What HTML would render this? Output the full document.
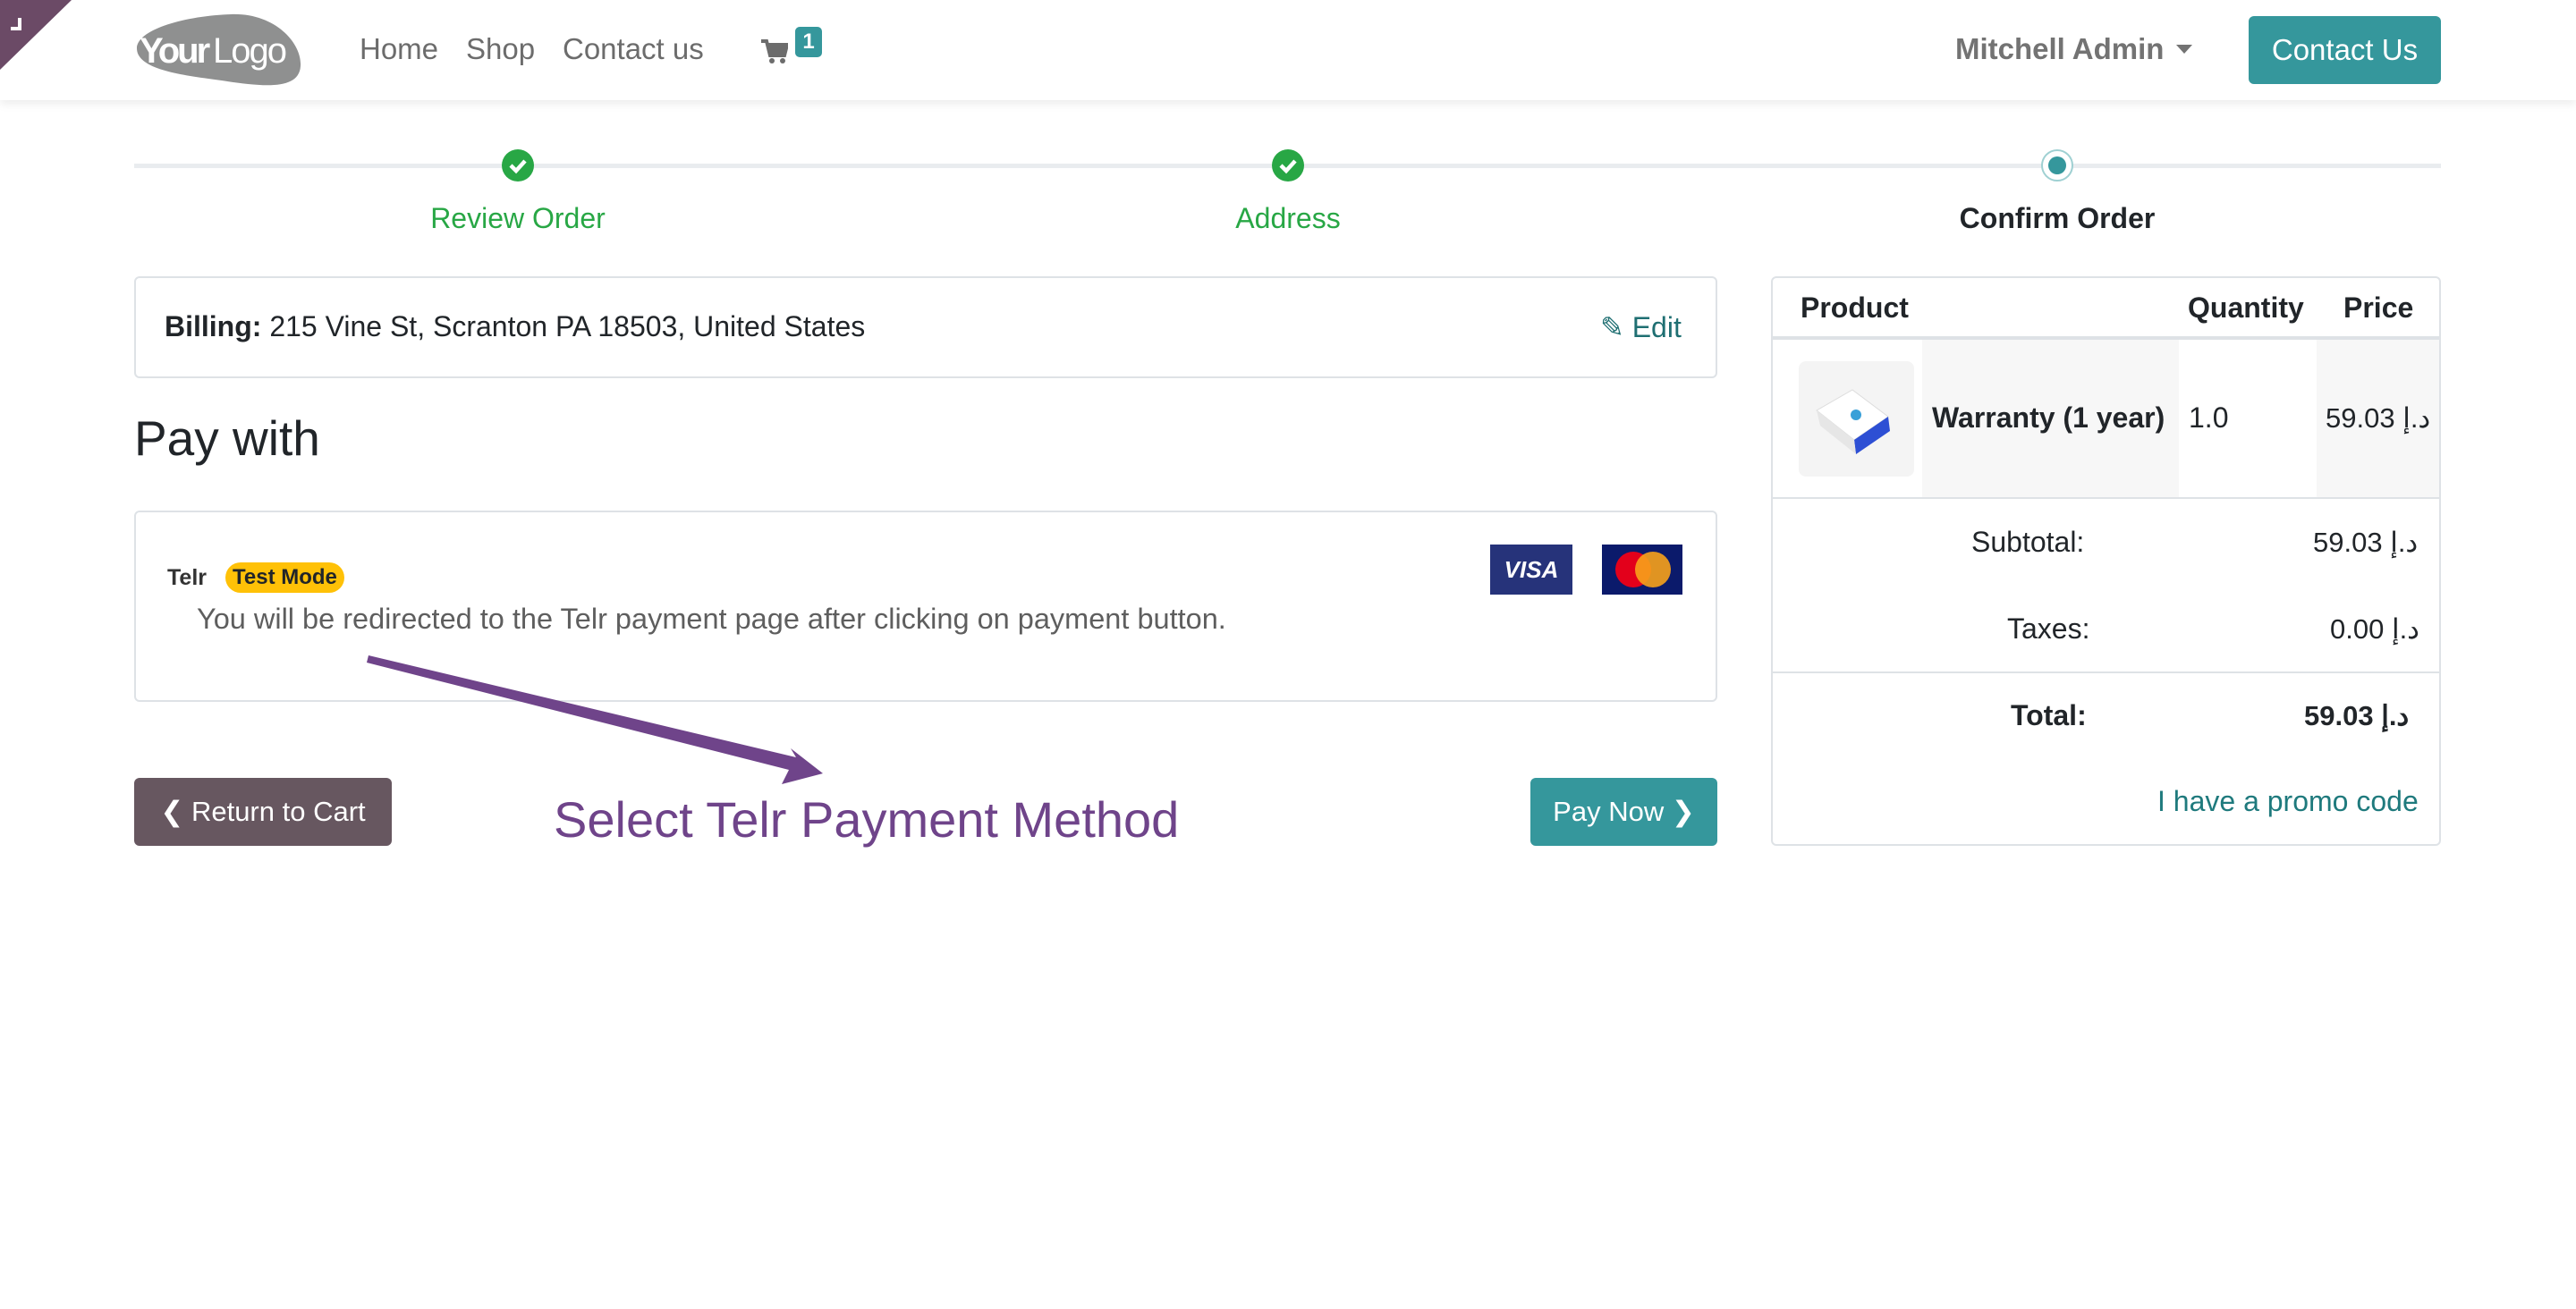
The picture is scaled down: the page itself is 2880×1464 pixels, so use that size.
<!DOCTYPE html>
<html><head><meta charset="utf-8"><style>
*{margin:0;padding:0;box-sizing:border-box}
body{width:2880px;height:1464px;background:#fff;font-family:"Liberation Sans",sans-serif;position:relative;overflow:hidden;color:#212529}
.a{position:absolute;white-space:nowrap}
.nav{position:absolute;left:0;top:0;width:2880px;height:112px;background:#fff;box-shadow:0 4px 10px rgba(0,0,0,.08)}
.navl{font-size:33px;color:#6c6c6c;top:36px}
.card{position:absolute;border:2px solid #dee2e6;border-radius:6px;background:#fff}
.t31{font-size:31px}
.dot{position:absolute;width:36px;height:36px;border-radius:50%;background:#28a745}
.lbl{font-size:31px;top:226px;transform:translateX(-50%)}
.btn{position:absolute;border-radius:6px;color:#fff;font-size:31px;display:flex;align-items:center;justify-content:center}
.cell{position:absolute;background:#f7f7f7}
</style></head><body>
<div class="nav"></div>
<svg class="a" style="left:0;top:0" width="82" height="80"><polygon points="0,0 80,0 0,78" fill="#6b4a66"/><path d="M22 20 V32 H12" stroke="#fff" stroke-width="4" fill="none"/></svg>
<svg class="a" style="left:148px;top:14px" width="195" height="84"><path d="M5 40 C5 20 55 4 110 2 C160 0 190 35 188 60 C186 92 130 80 85 74 C40 68 5 60 5 40Z" fill="#8f9090"/><text x="8" y="56" font-family="Liberation Sans" font-weight="bold" font-size="40" fill="#fff" letter-spacing="-3">Your</text><text x="90" y="56" font-family="Liberation Sans" font-size="40" fill="#fff" letter-spacing="-2">Logo</text></svg>
<div class="a navl" style="left:402px">Home</div>
<div class="a navl" style="left:521px">Shop</div>
<div class="a navl" style="left:629px">Contact us</div>
<svg class="a" style="left:851px;top:44px" width="30" height="28" viewBox="0 0 30 28"><path d="M0 2h6l4 16h16l3-12H8" fill="none" stroke="#6c6c6c" stroke-width="4"/><rect x="8" y="7" width="19" height="9" fill="#6c6c6c"/><circle cx="12" cy="24" r="3" fill="#6c6c6c"/><circle cx="24" cy="24" r="3" fill="#6c6c6c"/></svg>
<div class="a" style="left:889px;top:30px;width:30px;height:34px;background:#35979c;border-radius:5px;color:#fff;font-weight:bold;font-size:24px;text-align:center;line-height:34px">1</div>
<div class="a" style="left:2186px;top:36px;font-size:33px;font-weight:bold;color:#737373">Mitchell Admin</div>
<div class="a" style="left:2433px;top:50px;width:0;height:0;border-left:9px solid transparent;border-right:9px solid transparent;border-top:10px solid #737373"></div>
<div class="btn" style="left:2514px;top:18px;width:215px;height:76px;background:#35979c;font-size:33px">Contact Us</div>

<div class="a" style="left:150px;top:183px;width:2579px;height:5px;background:#e9ecef"></div>
<div class="dot" style="left:561px;top:167px"></div>
<div class="dot" style="left:1422px;top:167px"></div>
<svg class="a" style="left:561px;top:167px" width="36" height="36"><path d="M10 18l6 6 10-11" stroke="#fff" stroke-width="4.5" fill="none"/></svg>
<svg class="a" style="left:1422px;top:167px" width="36" height="36"><path d="M10 18l6 6 10-11" stroke="#fff" stroke-width="4.5" fill="none"/></svg>
<div class="a" style="left:2282px;top:167px;width:36px;height:36px;border-radius:50%;background:#fff;border:2px solid #9fd0d2"></div>
<div class="a" style="left:2290px;top:175px;width:20px;height:20px;border-radius:50%;background:#35979c"></div>
<div class="a lbl" style="left:579px;color:#28a745;font-size:32px">Review Order</div>
<div class="a lbl" style="left:1440px;color:#28a745;font-size:32px">Address</div>
<div class="a lbl" style="left:2300px;font-weight:bold;font-size:32px">Confirm Order</div>

<div class="card" style="left:150px;top:309px;width:1770px;height:114px"></div>
<div class="a" style="left:184px;top:347px;font-size:32px"><b>Billing:</b> 215 Vine St, Scranton PA 18503, United States</div>
<div class="a" style="left:1789px;top:347px;color:#1f6f72;font-size:32px">&#9998;&#xFE0E; Edit</div>
<div class="a" style="left:150px;top:458px;font-size:55px">Pay with</div>

<div class="card" style="left:150px;top:571px;width:1770px;height:214px"></div>
<div class="a" style="left:187px;top:632px;font-size:25px;font-weight:bold;color:#333">Telr</div>
<div class="a" style="left:252px;top:629px;background:#ffc107;border-radius:18px;padding:3px 8px;font-size:24px;font-weight:bold">Test Mode</div>
<div class="a" style="left:220px;top:674px;color:#5e5e5e;font-size:32.5px">You will be redirected to the Telr payment page after clicking on payment button.</div>
<div class="a" style="left:1666px;top:609px;width:92px;height:56px;background:#26337a;color:#fff;font-weight:bold;font-style:italic;font-size:26px;text-align:center;line-height:56px">VISA</div>
<div class="a" style="left:1791px;top:609px;width:90px;height:56px;background:#0b1a6b"></div>
<div class="a" style="left:1806px;top:617px;width:40px;height:40px;border-radius:50%;background:#e3001b"></div>
<div class="a" style="left:1828px;top:617px;width:40px;height:40px;border-radius:50%;background:#f7a21b;opacity:.9"></div>

<svg class="a" style="left:400px;top:725px" width="540" height="160"><polygon points="12,8 490,122 484,112 520,140 474,152 482,136 10,16" fill="#6f448a"/></svg>
<div class="a" style="left:619px;top:884px;font-size:56px;color:#6f448a">Select Telr Payment Method</div>

<div class="btn" style="left:150px;top:870px;width:288px;height:76px;background:#675760">&#10094;&nbsp;Return to Cart</div>
<div class="btn" style="left:1711px;top:870px;width:209px;height:76px;background:#35979c">Pay Now&nbsp;&#10095;</div>

<div class="card" style="left:1980px;top:309px;width:749px;height:637px"></div>
<div class="a" style="left:1982px;top:376px;width:745px;height:4px;background:#dee2e6"></div>
<div class="cell" style="left:2149px;top:380px;width:287px;height:176px"></div>
<div class="cell" style="left:2590px;top:380px;width:137px;height:176px"></div>
<div class="a" style="left:2011px;top:404px;width:129px;height:129px;background:#f4f4f4;border-radius:8px"></div>
<svg class="a" style="left:2011px;top:404px" width="129" height="129"><polygon points="20,55 60,32 100,62 62,88" fill="#fff" stroke="#ddd"/><polygon points="62,88 100,62 102,78 64,104" fill="#2d4fd4"/><polygon points="20,55 62,88 64,104 24,72" fill="#e6e6e6"/><circle cx="64" cy="60" r="6" fill="#39a0d8"/></svg>
<div class="a" style="left:2160px;top:449px;font-weight:bold;font-size:32px">Warranty (1 year)</div>
<div class="a" style="left:2447px;top:449px;font-size:32px">1.0</div>
<div class="a t31" style="left:2600px;top:450px">59.03 د.إ</div>
<div class="a" style="left:2013px;top:326px;font-weight:bold;font-size:32px">Product</div>
<div class="a" style="left:2446px;top:326px;font-weight:bold;font-size:32px">Quantity</div>
<div class="a" style="left:2620px;top:326px;font-weight:bold;font-size:32px">Price</div>
<div class="a" style="left:1982px;top:556px;width:745px;height:2px;background:#dee2e6"></div>
<div class="a" style="left:2204px;top:588px;font-size:32px">Subtotal:</div>
<div class="a t31" style="left:2586px;top:589px">59.03 د.إ</div>
<div class="a" style="left:2244px;top:685px;font-size:32px">Taxes:</div>
<div class="a t31" style="left:2605px;top:686px">0.00 د.إ</div>
<div class="a" style="left:1982px;top:751px;width:745px;height:2px;background:#dee2e6"></div>
<div class="a" style="left:2248px;top:782px;font-weight:bold;font-size:32px">Total:</div>
<div class="a t31" style="left:2576px;top:783px;font-weight:bold">59.03 د.إ</div>
<div class="a" style="left:2412px;top:878px;color:#1f7a7d;font-size:32px">I have a promo code</div>
</body></html>
